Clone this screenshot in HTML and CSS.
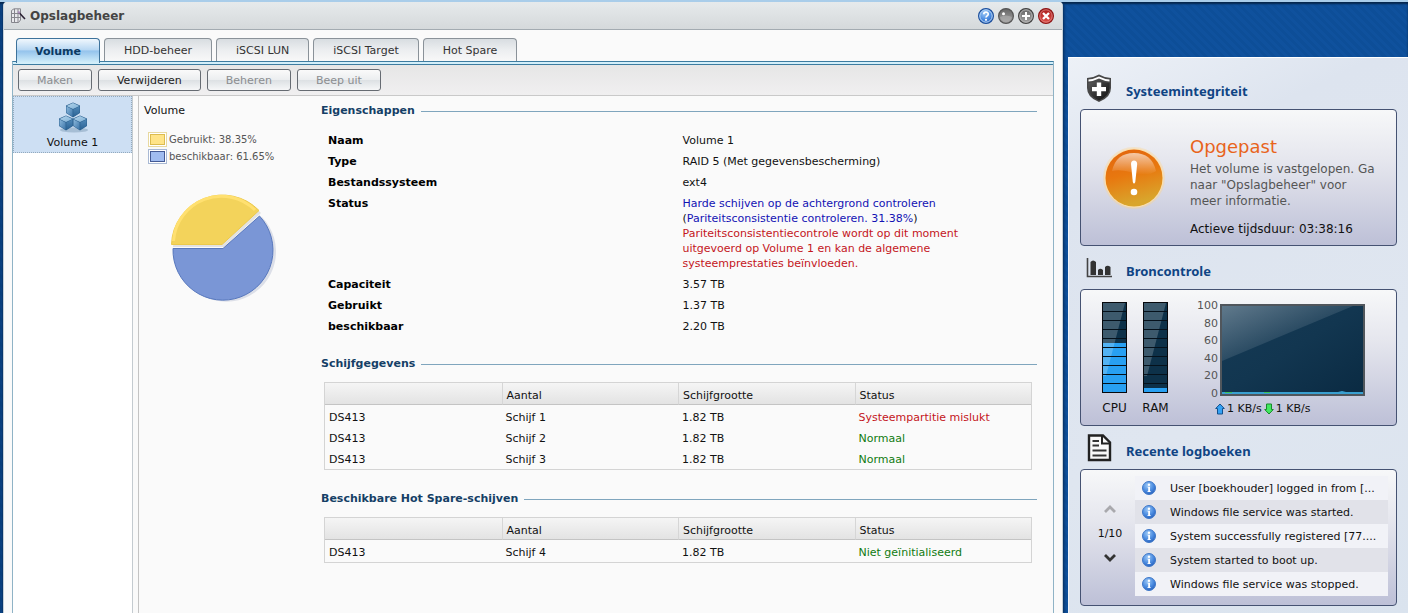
FILE: index.html
```html
<!DOCTYPE html>
<html lang="nl">
<head>
<meta charset="utf-8">
<title>Opslagbeheer</title>
<meta name="viewport" content="width=device-width, initial-scale=1">
<link rel="stylesheet" href="styles.css">
</head>
<body>
<svg class="defs" aria-hidden="true">
  <defs>
    <linearGradient id="cubeL" x1="0" y1="0" x2="1" y2="1"><stop offset="0" stop-color="#8db9dc"/><stop offset="1" stop-color="#3b74a8"/></linearGradient>
    <linearGradient id="cubeR" x1="0" y1="0" x2="0" y2="1"><stop offset="0" stop-color="#4f88b8"/><stop offset="1" stop-color="#2c6394"/></linearGradient>
    <linearGradient id="cubeT" x1="0" y1="0" x2="1" y2="1"><stop offset="0" stop-color="#b4d4ea"/><stop offset="1" stop-color="#7eb0d6"/></linearGradient>
    <radialGradient id="infoBlue" cx=".4" cy=".3" r=".8"><stop offset="0" stop-color="#9cc8f6"/><stop offset=".55" stop-color="#4a8be0"/><stop offset="1" stop-color="#1f56b4"/></radialGradient>
    <linearGradient id="gloss" x1="0" y1="0" x2="0" y2="1"><stop offset="0" stop-color="#fff" stop-opacity=".85"/><stop offset="1" stop-color="#fff" stop-opacity="0"/></linearGradient>
    <linearGradient id="orange" x1="0" y1="0" x2=".25" y2="1"><stop offset="0" stop-color="#e2640e"/><stop offset=".5" stop-color="#e8780f"/><stop offset="1" stop-color="#d9a52c"/></linearGradient>
    <linearGradient id="dark" x1="0" y1="0" x2="1" y2="1"><stop offset="0" stop-color="#5c5c5c"/><stop offset=".5" stop-color="#333"/><stop offset="1" stop-color="#111"/></linearGradient>
    <linearGradient id="gray" x1="0" y1="0" x2="0" y2="1"><stop offset="0" stop-color="#666"/><stop offset="1" stop-color="#a4a4a4"/></linearGradient>
    <linearGradient id="red" x1="0" y1="0" x2="0" y2="1"><stop offset="0" stop-color="#a81c1c"/><stop offset="1" stop-color="#e0524c"/></linearGradient>
    <linearGradient id="navy" x1="0" y1="0" x2="1" y2="1"><stop offset="0" stop-color="#163b56"/><stop offset=".5" stop-color="#123650"/><stop offset="1" stop-color="#0a2a42"/></linearGradient>
    <linearGradient id="shine" x1="0" y1="0" x2="1" y2="1"><stop offset="0" stop-color="#fff" stop-opacity=".32"/><stop offset=".6" stop-color="#fff" stop-opacity=".06"/></linearGradient>
    <symbol id="cube" viewBox="0 0 16 16">
      <path d="M8 .5 15 3.600V11L8 15.500 1 11V3.600Z" fill="#2b608f"/>
      <path d="M8 1 14.500 3.900 8 7 1.500 3.900Z" fill="url(#cubeT)"/>
      <path d="M1.500 4.500 7.600 7.500V14.700L1.500 10.800Z" fill="url(#cubeL)"/>
      <path d="M8.300 7.500 14.500 4.500V10.800L8.300 14.700Z" fill="url(#cubeR)"/>
    </symbol>
    <symbol id="info" viewBox="0 0 14 14">
      <circle cx="7" cy="7" r="6.500" fill="url(#infoBlue)" stroke="#3f78c8"/>
      <circle cx="7" cy="3.700" r="1.200" fill="#fff"/>
      <path d="M5.500 5.800H8V10.200H8.800V11H5.400V10.200H6.200V6.600H5.500Z" fill="#fff"/>
    </symbol>
  </defs>
</svg>

<div class="desktop">
  <main class="window">
    <header class="titlebar">
      <svg class="title-icon" viewBox="0 0 16 16" aria-hidden="true">
        <path d="M1.500 2.500 4 .8H10.500V12L8.500 14.500H1.500Z" fill="#e8e8ec" stroke="#85858c"/>
        <path d="M1.500 5.500H10.500M1.500 9.500H10.500M4.500 1V14.500M8 1V14.500" stroke="#85858c" fill="none"/>
        <path d="M8.500 4 15 11" stroke="#2b2233" stroke-width="1.600"/>
        <path d="M8 3.500 9.800 5.400" stroke="#b090c0" stroke-width="1.600"/>
      </svg>
      <h1>Opslagbeheer</h1>
      <div class="window-tools">
        <button type="button" aria-label="Help"><svg viewBox="0 0 16 16"><circle cx="8" cy="8" r="7.400" fill="url(#infoBlue)" stroke="#1d4f9c" stroke-width="1.200"/><circle cx="8" cy="8" r="6.200" fill="none" stroke="#b9d7f5"/><path d="M5.800 6.300C5.800 3.400 10.300 3.500 10.200 6.200 10.100 7.900 8 7.800 8 9.600" fill="none" stroke="#fff" stroke-width="1.700"/><circle cx="8" cy="11.800" r="1.100" fill="#fff"/></svg></button>
        <button type="button" aria-label="Minimaliseren"><svg viewBox="0 0 16 16"><circle cx="8" cy="8" r="7.400" fill="url(#gray)" stroke="#555" stroke-width="1.200"/><path d="M2 9Q8 6 14 9 12.500 14 8 14 3.500 14 2 9Z" fill="#b0b0b0" opacity=".6"/><circle cx="5.500" cy="5.800" r="1.500" fill="#fff"/></svg></button>
        <button type="button" aria-label="Maximaliseren"><svg viewBox="0 0 16 16"><circle cx="8" cy="8" r="7.400" fill="url(#gray)" stroke="#444" stroke-width="1.200"/><circle cx="8" cy="8" r="6.200" fill="none" stroke="#b5b5b5"/><path d="M8 4V12M4 8H12" stroke="#fff" stroke-width="2"/></svg></button>
        <button type="button" aria-label="Sluiten"><svg viewBox="0 0 16 16"><circle cx="8" cy="8" r="7.400" fill="url(#red)" stroke="#8e1515" stroke-width="1.200"/><circle cx="8" cy="8" r="6.200" fill="none" stroke="#e59a96" stroke-width=".7"/><path d="M5 5 11 11M11 5 5 11" stroke="#fff" stroke-width="2.300"/></svg></button>
      </div>
    </header>

    <div class="window-body">
      <div class="tabs" role="tablist">
        <button class="tab active" type="button" role="tab" aria-selected="true">Volume</button>
        <button class="tab" type="button" role="tab">HDD-beheer</button>
        <button class="tab" type="button" role="tab">iSCSI LUN</button>
        <button class="tab" type="button" role="tab">iSCSI Target</button>
        <button class="tab" type="button" role="tab">Hot Spare</button>
      </div>
      <div class="panel">
        <div class="toolbar">
          <button class="btn" type="button" disabled>Maken</button>
          <button class="btn" type="button">Verwijderen</button>
          <button class="btn" type="button" disabled>Beheren</button>
          <button class="btn" type="button" disabled>Beep uit</button>
        </div>
        <div class="panel-body">
          <nav class="volumes">
            <button class="volume" type="button">
              <svg viewBox="0 0 32 32" aria-hidden="true"><ellipse cx="17" cy="28" rx="14" ry="2.500" fill="#7f9db8" opacity=".5"/><use href="#cube" x="8" y="0" width="16" height="16"/><use href="#cube" x="1" y="13" width="16" height="16"/><use href="#cube" x="15" y="13" width="16" height="16"/></svg>
              <span>Volume 1</span>
            </button>
          </nav>
          <div class="content">
            <section class="usage">
              <h2>Volume</h2>
              <ul class="legend">
                <li><i class="swatch used"></i>Gebruikt: 38.35%</li>
                <li><i class="swatch free"></i>beschikbaar: 61.65%</li>
              </ul>
              <svg class="pie" viewBox="164 186 120 120" role="img" aria-label="Gebruikt 38.35%, beschikbaar 61.65%">
                <path d="M225 252H176A50 50 0 1 0 262 218Z" fill="#dcdfe8"/>
                <path d="M224 248H173A51 51 0 0 1 261 214Z" fill="#e2e2e2"/>
                <path d="M222 245.500H171.500A51 51 0 0 1 259 211.500Z" fill="#f3d35b" stroke="#ecc94b"/>
                <path d="M173.500 242A48 48 0 0 1 255 211" fill="none" stroke="#ffe070" stroke-width="3"/>
                <path d="M223 249.500H173A50 50 0 1 0 259.500 217Z" fill="#7a96d6" stroke="#5878bd"/>
              </svg>
            </section>

            <div class="details">
              <section>
                <h2 class="legend-title">Eigenschappen</h2>
                <dl class="props">
                  <dt>Naam</dt><dd>Volume 1</dd>
                  <dt>Type</dt><dd>RAID 5 (Met gegevensbescherming)</dd>
                  <dt>Bestandssysteem</dt><dd>ext4</dd>
                  <dt>Status</dt><dd class="status"><span class="blue">Harde schijven op de achtergrond controleren</span> (<span class="blue">Pariteitsconsistentie controleren. 31.38%</span>)<br><span class="red">Pariteitsconsistentiecontrole wordt op dit moment uitgevoerd op Volume 1 en kan de algemene systeemprestaties beïnvloeden.</span></dd>
                  <dt>Capaciteit</dt><dd>3.57 TB</dd>
                  <dt>Gebruikt</dt><dd>1.37 TB</dd>
                  <dt>beschikbaar</dt><dd>2.20 TB</dd>
                </dl>
              </section>
              <section>
                <h2 class="legend-title">Schijfgegevens</h2>
                <table class="disks">
                  <thead><tr><th></th><th>Aantal</th><th>Schijfgrootte</th><th>Status</th></tr></thead>
                  <tbody>
                    <tr><td>DS413</td><td>Schijf 1</td><td>1.82 TB</td><td class="red">Systeempartitie mislukt</td></tr>
                    <tr><td>DS413</td><td>Schijf 2</td><td>1.82 TB</td><td class="green">Normaal</td></tr>
                    <tr><td>DS413</td><td>Schijf 3</td><td>1.82 TB</td><td class="green">Normaal</td></tr>
                  </tbody>
                </table>
              </section>
              <section>
                <h2 class="legend-title">Beschikbare Hot Spare-schijven</h2>
                <table class="disks">
                  <thead><tr><th></th><th>Aantal</th><th>Schijfgrootte</th><th>Status</th></tr></thead>
                  <tbody>
                    <tr><td>DS413</td><td>Schijf 4</td><td>1.82 TB</td><td class="green">Niet geïnitialiseerd</td></tr>
                  </tbody>
                </table>
              </section>
            </div>
          </div>
        </div>
      </div>
    </div>
  </main>

  <aside class="widgets">
    <section class="widget">
      <header>
        <svg viewBox="0 0 28 30" aria-hidden="true"><path d="M14 1.500Q19 4.500 26 5V15Q26 24.500 14 29 2 24.500 2 15V5Q9 4.500 14 1.500Z" fill="#484848"/><path d="M14 3.500Q19 6 24.500 6.500V8.500Q19 8 14 5.500 9 8 3.500 8.500V6.500Q9 6 14 3.500Z" fill="#fff"/><path d="M14 7.500Q19 9.500 24.500 10V15Q24 23.500 14 27.500 4 23.500 3.500 15V10Q9 9.500 14 7.500Z" fill="url(#dark)"/><path d="M11.800 9.500H16.200V14H21V18.200H16.200V23H11.800V18.200H7V14H11.800Z" fill="#fff"/></svg>
        <h2>Systeemintegriteit</h2>
      </header>
      <div class="card health">
        <svg viewBox="0 0 64 64" aria-hidden="true"><circle cx="32" cy="32" r="31" fill="#ffd58a" opacity=".35"/><circle cx="32" cy="32" r="29.500" fill="#fbe0ae"/><circle cx="32" cy="32" r="28.500" fill="url(#orange)"/><path d="M10 25Q14 7 32 7T54 25Q45 31 32 27T10 25Z" fill="url(#gloss)" opacity=".75"/><path d="M29 18Q29 14.500 32 14.500T35.200 18L33.300 36Q32 39 30.800 36Z" fill="#fff"/><circle cx="32" cy="46" r="3.300" fill="#fff"/></svg>
        <div class="health-text">
          <strong>Opgepast</strong>
          <p>Het volume is vastgelopen. Ga naar "Opslagbeheer" voor meer informatie.</p>
          <p class="uptime">Actieve tijdsduur: 03:38:16</p>
        </div>
      </div>
    </section>

    <section class="widget">
      <header>
        <svg viewBox="0 0 28 30" aria-hidden="true"><path d="M2.500 5V23.500H27" fill="none" stroke="#444" stroke-width="1.600"/><path d="M5.500 22V9Q8 6 11 9V22ZM13 22V17Q15.300 14.500 18 17V22ZM20 22V14Q22.500 11.500 25.500 14V22Z" fill="#333"/></svg>
        <h2>Broncontrole</h2>
      </header>
      <div class="card resources">
        <figure class="gauge">
          <svg viewBox="0 0 25 91" aria-hidden="true"><rect width="25" height="91" fill="#06080c"/><rect x="1" y="1" width="23" height="89" fill="#0d3149"/><rect x="1" y="41" width="23" height="49" fill="#28a0f2"/><path d="M1 1H23L4 74H1Z" fill="#fff" opacity=".2"/><path d="M1 9.500H24M1 18.500H24M1 27.500H24M1 36.500H24M1 45.500H24M1 54.500H24M1 63.500H24M1 72.500H24M1 81.500H24" stroke="#05111b"/></svg>
          <figcaption>CPU</figcaption>
        </figure>
        <figure class="gauge">
          <svg viewBox="0 0 25 91" aria-hidden="true"><rect width="25" height="91" fill="#06080c"/><rect x="1" y="1" width="23" height="89" fill="#0d3149"/><rect x="1" y="86" width="23" height="4" fill="#28a0f2"/><path d="M1 1H23L4 74H1Z" fill="#fff" opacity=".2"/><path d="M1 9.500H24M1 18.500H24M1 27.500H24M1 36.500H24M1 45.500H24M1 54.500H24M1 63.500H24M1 72.500H24M1 81.500H24" stroke="#05111b"/></svg>
          <figcaption>RAM</figcaption>
        </figure>
        <div class="network">
          <div class="axis"><span>100</span><span>80</span><span>60</span><span>40</span><span>20</span><span>0</span></div>
          <svg class="chart" viewBox="0 0 145 92" aria-hidden="true"><rect x="1" y="1" width="143" height="90" fill="url(#navy)" stroke="#50565c" stroke-width="2"/><path d="M2 2H133L2 57Z" fill="url(#shine)"/><path d="M2 88H118L122 87 126 88H143V90H2Z" fill="#3aa0d0"/><path d="M5 88.500H12M44 88.500H50" stroke="#3cc05a"/></svg>
          <div class="rates">
            <svg viewBox="0 0 10 12" aria-hidden="true"><path d="M5 1 9.300 5.500H7.500V11H2.500V5.500H.7Z" fill="#35a2f5" stroke="#12508c"/></svg><span>1 KB/s</span>
            <svg viewBox="0 0 10 12" aria-hidden="true"><path d="M5 11 9.300 6.500H7.500V1H2.500V6.500H.7Z" fill="#42e860" stroke="#178a2a"/></svg><span>1 KB/s</span>
          </div>
        </div>
      </div>
    </section>

    <section class="widget">
      <header>
        <svg viewBox="0 0 28 30" aria-hidden="true"><path d="M4 2.500H18L25 9.500V27H4Z" fill="#f8f8f8" stroke="#222" stroke-width="2.400"/><path d="M17 2V10.500H25" fill="none" stroke="#222" stroke-width="2"/><path d="M7.500 8H14M7.500 12.500H14M7.500 17.500H21.500M7.500 22.500H21.500" stroke="#333" stroke-width="2.200"/></svg>
        <h2>Recente logboeken</h2>
      </header>
      <div class="card logs">
        <div class="pager">
          <button type="button" aria-label="Vorige"><svg viewBox="0 0 14 10"><path d="M2 8 7 3 12 8" fill="none" stroke="#a9a9ad" stroke-width="2.800"/></svg></button>
          <span>1/10</span>
          <button type="button" aria-label="Volgende"><svg viewBox="0 0 14 10"><path d="M2 2 7 7 12 2" fill="none" stroke="#333" stroke-width="2.800"/></svg></button>
        </div>
        <ul>
          <li><svg aria-hidden="true"><use href="#info"/></svg><span>User [boekhouder] logged in from [...</span></li>
          <li><svg aria-hidden="true"><use href="#info"/></svg><span>Windows file service was started.</span></li>
          <li><svg aria-hidden="true"><use href="#info"/></svg><span>System successfully registered [77....</span></li>
          <li><svg aria-hidden="true"><use href="#info"/></svg><span>System started to boot up.</span></li>
          <li><svg aria-hidden="true"><use href="#info"/></svg><span>Windows file service was stopped.</span></li>
        </ul>
      </div>
    </section>
  </aside>
</div>
</body>
</html>
```
FILE: styles.css
```css
*, *::before, *::after { box-sizing: border-box; }
body, h1, h2, p, ul, dl, dd, figure { margin: 0; }
body {
  font: 11px/15px "DejaVu Sans", Verdana, sans-serif;
  color: #111;
  background: #0d4c94;
}
button { font: inherit; color: inherit; cursor: pointer; }
ul { list-style: none; padding: 0; }
svg { display: block; flex: none; }
.defs { position: absolute; width: 0; height: 0; }
.red { color: #c4161c; }
.green { color: #117a11; }
.blue { color: #1212b4; }

.desktop {
  display: grid;
  grid-template-columns: minmax(0, 1fr) 340px;
  column-gap: 5px;
  height: 100vh;
  overflow: hidden;
  padding-left: 3px;
  border-top: 2px solid #a9cdea;
  background: repeating-linear-gradient(45deg, #0f519d 0 3px, #0d4e98 3px 6px);
  box-shadow: inset 0 2px 2px #06264c;
}

/* Window */
.window {
  display: flex;
  flex-direction: column;
  min-height: 0;
  border: 1px solid #c6d0d8;
  border-width: 0 1px;
  border-radius: 4px 4px 0 0;
  background: #fafafa;
  box-shadow: 0 0 3px 1px #062a55;
}
.titlebar {
  display: flex;
  align-items: center;
  gap: 4px;
  height: 28px;
  padding: 0 8px 0 6px;
  border-bottom: 1px solid #a3abb1;
  border-radius: 3px 3px 0 0;
  background: linear-gradient(#e6eaec, #d5d9db);
}
.titlebar h1 { flex: 1; font-size: 12px; line-height: 16px; color: #444; }
.title-icon { width: 16px; height: 16px; }
.window-tools { display: flex; gap: 4px; }
.window-tools button { padding: 0; border: 0; background: none; }
.window-tools svg { width: 16px; height: 16px; }
.window-body { flex: 1; display: flex; flex-direction: column; padding: 8px 8px 0; min-height: 0; }

.tabs { display: flex; gap: 4px; padding-left: 4px; height: 23px; }
.tab {
  padding: 0 19px;
  border: 1px solid #8a9299;
  border-bottom: 0;
  border-radius: 4px 4px 0 0;
  color: #333;
  background: linear-gradient(#d8dde1, #eceef0 50%, #f8f8f8);
}
.tab.active {
  position: relative;
  height: 25px;
  padding: 0 18px;
  border-color: #3d729b;
  color: #0b3a63;
  font-weight: bold;
  background: linear-gradient(#f0f7fd, #b9d8f3 45%, #94c3ec 50%, #d3effa);
}
.panel {
  flex: 1;
  display: flex;
  flex-direction: column;
  border: 1px solid #3d7ca0;
  border-color: #3d7ca0 #8fb3c6;
  border-bottom: 0;
}
.panel::before { content: ""; height: 3px; background: #d3effa; border-bottom: 1px solid #3d7ca0; }
.toolbar {
  display: flex;
  gap: 6px;
  padding: 4px 5px;
  height: 31px;
  border-bottom: 1px solid #c9c9c9;
  background: linear-gradient(#e6e6e6, #f0eff0);
}
.btn {
  height: 22px;
  padding: 0 18px;
  border: 1px solid #666b72;
  border-radius: 3px;
  color: #222;
  background: linear-gradient(#fafafa, #eceef0 48%, #dde1e4 52%, #f6f7f8);
}
.btn:disabled { color: #8b8d90; cursor: default; }
.panel-body { flex: 1; display: flex; gap: 5px; }
.volumes { flex: none; width: 120px; background: #fff; border-right: 1px solid #c4cbd0; }
.volume {
  display: flex;
  flex-direction: column;
  align-items: center;
  gap: 1px;
  width: 100%;
  height: 57px;
  padding: 5px 0 0;
  border: 1px dotted #93a9bd;
  color: #111;
  background: #cddff3;
}
.volume svg { width: 32px; height: 32px; }
.content { flex: 1; display: flex; min-width: 0; padding: 7px 16px 0 5px; border-left: 1px solid #c4c4c4; }

.usage { flex: none; width: 177px; }
.usage h2 { font-size: 11px; font-weight: normal; }
.legend { padding: 13px 0 0 4px; color: #555; font-size: 10px; }
.legend li { display: flex; align-items: center; gap: 2px; height: 17px; white-space: nowrap; }
.swatch { width: 19px; height: 15px; border: 1px solid #ccc; }
.swatch.used { background-color: #ffe488; border-color: #e8d9a0; box-shadow: inset 0 0 0 1px #fff, inset 0 0 0 2px #dcbc50; }
.swatch.free { background-color: #a0bcf0; border-color: #a9b9d4; box-shadow: inset 0 0 0 1px #fff, inset 0 0 0 2px #445a94; }
.pie { width: 120px; height: 120px; margin: 20px 0 0 20px; }

.details { flex: 1; min-width: 0; }
.legend-title {
  display: flex;
  align-items: center;
  gap: 6px;
  font-size: 11px;
  line-height: 16px;
  color: #153f66;
}
.legend-title::after { content: ""; flex: 1; height: 1px; background: #7fa5bd; }
.props {
  display: grid;
  grid-template-columns: 1fr 1fr;
  row-gap: 6px;
  padding: 14px 0 22px 7px;
}
.props dt { font-weight: bold; color: #000; }
.status { max-width: 310px; }
.disks {
  width: calc(100% - 8px);
  margin: 10px 0 21px 3px;
  table-layout: fixed;
  border-collapse: separate;
  border-spacing: 0;
  border: 1px solid #d4d4d4;
}
.disks th {
  height: 22px;
  padding: 3px 4px 0;
  border-bottom: 1px solid #c4c4c4;
  border-left: 1px solid #d6d6d6;
  font-weight: normal;
  text-align: left;
  background: linear-gradient(#f5f5f5, #e3e3e3);
}
.disks th:first-child { border-left: 0; }
.disks td { height: 21px; padding: 3px 4px 1px; }
.disks tbody tr:first-child td { height: 22px; padding-top: 4px; }

/* Widgets */
.widgets {
  margin-top: 55px;
  padding: 9px 11px 0;
  border-top: 1px solid #fff;
  border-left: 1px solid #f0f4fa;
  background: linear-gradient(155deg, #edf1f7 0, #dde4ef 20%, #dfe6f0 60%, #dae3ee);
}
.widget header { display: flex; align-items: center; gap: 13px; height: 42px; padding-left: 5px; }
.widget header svg { width: 28px; height: 30px; }
.widget h2 { padding-top: 5px; font: bold 13px/16px "Noto Sans", "Open Sans", sans-serif; color: #0f4484; }
.card {
  height: 137px;
  margin-bottom: 1px;
  border: 1px solid #455272;
  border-radius: 4px;
  background: linear-gradient(#f7f8f9, #e4e5ed 40%, #bdc0d7);
}
.health { display: flex; align-items: center; gap: 24px; padding: 0 15px 0 21px; }
.health svg { width: 64px; height: 64px; }
.health-text { font-size: 12px; line-height: 16px; padding-top: 18px; }
.health-text strong { display: block; font-size: 18px; line-height: 20px; padding-bottom: 4px; font-weight: normal; color: #e8641c; }
.health-text p { color: #555; }
.health-text .uptime { padding-top: 12px; color: #111; }

.resources { display: flex; gap: 16px; padding: 12px 20px 0 21px; }
.gauge { width: 25px; display: flex; flex-direction: column; align-items: center; gap: 8px; font-size: 12px; }
.gauge svg { width: 25px; height: 91px; }
.network { display: grid; grid-template-columns: 34px 145px; column-gap: 2px; row-gap: 5px; align-content: start; padding-top: 2px; }
.axis { display: flex; flex-direction: column; justify-content: space-between; height: 100px; margin: -4px 0; line-height: 12px; text-align: right; color: #555; }
.chart { width: 145px; height: 92px; }
.rates { grid-column: 1 / -1; display: flex; align-items: center; gap: 2px; padding-left: 31px; white-space: nowrap; }
.rates svg { width: 10px; height: 12px; }

.logs { display: flex; padding: 6px 8px; }
.pager { flex: none; width: 46px; display: flex; flex-direction: column; align-items: center; justify-content: center; gap: 12px; padding: 0 4px 8px 0; }
.pager button { padding: 0; border: 0; background: none; }
.pager svg { width: 14px; height: 10px; }
.logs ul { flex: 1; min-width: 0; }
.logs li { display: flex; align-items: center; gap: 14px; height: 24px; padding: 0 4px 0 7px; background: #f1f2f7; white-space: nowrap; }
.logs li:nth-child(even) { background: #e1e2e9; }
.logs li svg { width: 14px; height: 14px; }
```
